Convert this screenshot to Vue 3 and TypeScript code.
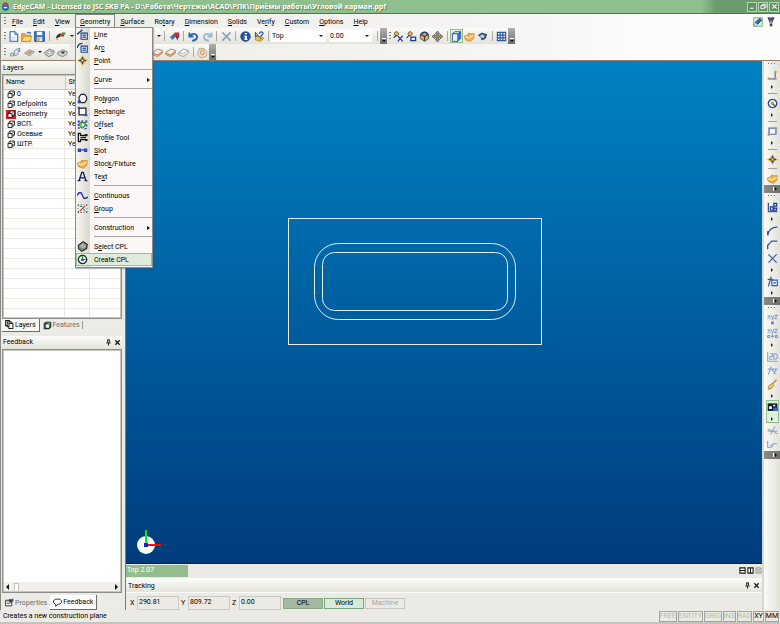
<script setup lang="ts">
import { computed, defineComponent, h, ref } from 'vue'

type Shape = [d: string, fill: string, stroke?: string, width?: number]

const NAVY = '#1c3a86'
const BLUE = '#2a62b8'
const GREY = '#8c8c88'
const PALE = '#8aa4cc'
const GOLD = '#f2b53a'

const glyphs: Record<string, Shape[]> = {
  app: [
    ['M3 7a5 5 0 0 1 10 0v4a5 4 0 0 1-10 0z', '#2f6fd0', '#16418f', 1],
    ['M5 1h6l2 4H3z', '#d8402c'],
    ['M5 9h6v2H5z', '#ffffff'],
  ],
  file: [
    ['M3 1h7l4 4v10H3z', '#ffffff', '#2f5fa8', 1.5],
    ['M10 1v4h4', '#a8c8f0', '#2f5fa8', 1.2],
    ['M5 8h6v5H5z', '#d5e6fa'],
  ],
  open: [
    ['M1 4h5l2 2h6v9H1z', '#f4b640', '#a86c10', 1],
    ['M4 8h12l-3 7H1z', '#ffd97a', '#c88a20', 1],
    ['M9 3c2-2 4-1 5 1', 'none', '#2a62b8', 1.8],
  ],
  save: [
    ['M1 1h14v14H1z', '#3c78cc', '#1d4a90', 1.4],
    ['M4 1h8v5H4z', '#ffffff'],
    ['M4 9h8v6H4z', '#dfe8f5'],
    ['M5 10h3v5H5z', '#e8a030'],
  ],
  paint: [
    ['M1 10c2-5 6-7 8-6l-1 4-5 2z', '#2d3238'],
    ['M7 4h7l-1 4H8z', '#c83a28'],
    ['M10 2h5v3h-5z', '#3a9a44'],
    ['M2 10l4 1-4 3z', '#e0a040'],
  ],
  flag: [
    ['M1 9l6-5 3 4-5 5z', '#3c70c0'],
    ['M8 2h7v7l-3 2-5-5z', '#c03028'],
    ['M10 8h4l-2 6z', '#20408c'],
    ['M1 9l3 1v3z', '#f0c040'],
  ],
  undo: [['M2 2v6h6M3 7c4-5 11-3 10 3-1 3-4 4-7 4', 'none', BLUE, 2.6]],
  redo: [['M14 2v6H8M13 7C9 2 2 4 3 10c1 3 4 4 7 4', 'none', '#9ab6da', 2.6]],
  cross: [['M2 2l12 12M14 2L2 14', 'none', '#8aa2bc', 2.4]],
  info: [
    ['M8 1a7 7 0 1 0 .1 0z', '#2456a8', '#14387a', 1],
    ['M7 3h3v2H7zM6 7h4v5h1v1H6v-1h1V8H6z', '#ffffff'],
  ],
  help: [
    ['M2 8h10l2 3-5 4-7-2z', '#f2c23c', '#9a7410', 1],
    ['M2 2l7 8M2 2v6l3-2', 'none', '#404040', 1.4],
    ['M8 4c0-4 6-3 5 0-1 2-3 2-3 4M10 10v2', 'none', BLUE, 2],
  ],
  snapPoint: [
    ['M5 1a3 3 0 1 0 .1 0z', GOLD, '#303030', 1],
    ['M1 10l4-4M7 7l7 8M14 7l-7 8', 'none', NAVY, 1.8],
  ],
  snapBox: [
    ['M6 1a3 3 0 1 0 .1 0z', GOLD, '#303030', 1],
    ['M1 10l4-4M7 9h7v5H7z', 'none', NAVY, 1.8],
  ],
  rotate: [
    ['M8 2l6 4v5l-6 4-6-4V6z', GOLD, '#3a3a3a', 1.2],
    ['M3 5l5 3 5-3M8 8v6M2 6c3-6 9-6 12 0', 'none', NAVY, 1.8],
  ],
  move: [
    ['M8 0l3 4H9v3h3V5l4 3-4 3V9H9v3h2l-3 4-3-4h2V9H4v2L0 8l4-3v2h3V4H5z', '#e09a20', '#29407c', 1],
  ],
  cube: [
    ['M2 4l4-3h8v10l-4 4H2z', '#e9f1fb', NAVY, 1.2],
    ['M2 4h8l4-3M10 4v11', 'none', NAVY, 1.3],
    ['M10 4l4-3v10l-4 4z', '#3a70c4'],
  ],
  stock: [
    ['M1 7l4-1 2-3 3 1 5 0-1 7-5 4-6-2-2-3z', '#f6b04a', '#c07c1c', 1],
    ['M2 8l5 2 7-4', 'none', '#ffe2a8', 2],
  ],
  shade: [
    ['M2 6l5-3 7 2-2 6-5 2-1-4z', '#3d5c90', '#222a44', 1],
    ['M4 7l5-2 2 4-4 1z', '#c9dcf4'],
  ],
  grid: [['M2 2h12v12H2zM2 6h12M2 10h12M6 2v12M10 2v12', 'none', '#3458a0', 1.7]],
  wire: [
    ['M1 9h4v4H1zM6 6l3-3 4 2-2 6-4 2z', '#dfe3ea', '#7484a0', 1.2],
    ['M11 2h3v5', 'none', '#5a78ae', 1.4],
  ],
  slabA: [
    ['M1 9l7-5 7 3-7 6z', '#c9d3e2', '#6a7890', 1],
    ['M4 9l4-3 4 1-4 3z', '#e07a38'],
  ],
  slabB: [
    ['M1 8l7-5 7 3-2 5-6 3-5-3z', '#d8d8d8', '#707478', 1.3],
    ['M4 9l4-3 4 1-4 3z', '#ffffff', '#8a8e94', 1],
  ],
  slabC: [
    ['M1 8l7-4 7 3-1 4-6 3-7-3z', '#cfd2d6', '#787c80', 1.2],
    ['M5 8l3-2 4 1-3 3z', '#44484c'],
  ],
  slabD: [
    ['M1 8l7-5 7 2v4l-7 5-7-3z', '#f2ece6', '#8f7c70', 1.2],
    ['M1 9l7 3 7-5', 'none', '#e88848', 2],
  ],
  slabE: [
    ['M1 8l7-5 7 2v4l-7 5-7-3z', '#f5f5f5', '#8f9298', 1.2],
    ['M1 8l7 2 7-5', 'none', '#a0a4aa', 1.2],
  ],
  swirl: [
    ['M3 2h7l4 4v7l-5 2H4l-3-5z', '#efe3c8', '#a8a090', 1.2],
    ['M11 5c-5-3-8 4-4 6 4 1 5-4 2-4', 'none', '#d0925a', 1.6],
  ],
  line: [
    ['M0 8l8-7', 'none', NAVY, 2],
    ['M6 6h9v9H6z', '#ffffff', NAVY, 1.6],
    ['M8 8h5v2H8zM8 11h5v2H8z', BLUE],
  ],
  arc: [
    ['M0 9c1-4 4-7 8-7', 'none', NAVY, 2],
    ['M6 6h9v9H6z', '#ffffff', NAVY, 1.6],
    ['M8 8h5v2H8zM8 11h5v2H8z', BLUE],
  ],
  point: [
    ['M8 0l3 5 5 3-5 3-3 5-3-5-5-3 5-3z', '#e8a828'],
    ['M8 3v10M3 8h10', 'none', '#2c3c70', 1.6],
    ['M6 6h4v4H6z', '#ffe060', '#2c3c70', 1],
  ],
  polygon: [
    ['M6 2h5l3 4v4l-3 4H6l-3-4V6z', '#ffffff', '#20243c', 1.8],
    ['M1 11h4v4H1z', '#2840d0'],
  ],
  rectangle: [
    ['M3 3h10v10H3z', '#ffffff', '#181c38', 1.8],
    ['M1 1h3v3H1zM12 12h3v3h-3z', '#2840d0'],
  ],
  offset: [
    ['M1 2h3v3H1zM6 2h3v2H6zM12 2h3v3h-3zM1 7h2v3H1zM1 12h3v2H1zM13 8h2v3h-2zM11 13h3v2h-3z', '#2840d0'],
    ['M4 5h8v5l-3 3H6l-2-3z', '#7cd070', '#287828', 1.4],
    ['M7 7h3v3H7z', '#ffffff'],
  ],
  profile: [
    ['M1 2h4v3h10M1 14h4v-3h10M2 2v12', 'none', '#101018', 1.8],
    ['M5 7h8v2H5zM12 3h3v3h-3zM12 10h3v3h-3z', '#101018'],
  ],
  slot: [
    ['M1 5h5v5H1zM10 5h5v5h-5z', '#2848e0'],
    ['M5 7h6', 'none', '#2848e0', 2],
  ],
  text: [['M3 14L7 2h2l4 12M5 10h6M1 14h4M11 14h4', 'none', '#101c58', 2]],
  continuous: [['M0 8l3-4h3l4 8h3l3-2', 'none', '#2030d8', 2]],
  group: [
    ['M1 1h14v14H1z', '#f2f2f2'],
    ['M1 2h2v2H1zM5 2h2v1H5zM9 2h2v1H9zM13 2h2v2h-2zM1 7h1v2H1zM14 7h1v2h-1zM1 12h2v2H1zM5 13h2v1H5zM9 13h2v1H9zM13 12h2v2h-2z', '#303030'],
    ['M4 12l8-8', 'none', '#d04040', 1.8],
    ['M4 5h4M9 8l3 4', 'none', '#2f8f6c', 1.8],
  ],
  selectCpl: [
    ['M2 6l7-5 6 4-1 6-7 4-5-4z', '#8b8d8a', '#262826', 1.6],
    ['M5 8l5-4M7 11l5-4', 'none', '#ffffff', 1.2],
    ['M4 11h4', 'none', '#3b9a3b', 1.4],
  ],
  createCpl: [
    ['M8 2a6 6 0 1 0 .1 0z', '#ffffff', '#20242c', 1.8],
    ['M8 3v5', 'none', '#30a030', 1.6],
    ['M8 8h5', 'none', '#e03030', 1.6],
    ['M6 7h4v3H6z', '#2840d0'],
  ],
  layer: [
    ['M6 1h9v8H6z', '#ffffff', '#202020', 1.8],
    ['M2 6h8v8H2z', '#f4f4f4', '#202020', 1.8],
    ['M2 6l4-5M10 6l5-5M10 14l5-5', 'none', '#202020', 1.6],
  ],
  layerTab: [
    ['M1 1h7v9H1z', '#ffffff', '#202020', 1.8],
    ['M4 3h7v9H4z', '#ffffff', '#202020', 1.8],
    ['M7 6h7v9H7z', '#ffffff', '#202020', 1.8],
  ],
  feature: [
    ['M2 4l3-2h9v9l-3 3H2z', '#2b4a48', '#101818', 1.2],
    ['M5 6h6v6H5z', '#e9f4f0'],
    ['M8 3h5v3H8z', '#44a878'],
  ],
  properties: [
    ['M1 4h11v10H1z', '#ffffff', '#303030', 1.6],
    ['M3 7h6M3 10h6', 'none', '#505050', 1.4],
    ['M7 2h7v4h-2v3h-3V6H7z', '#3a3a3a'],
    ['M13 1h2v5h-2z', BLUE],
  ],
  bubble: [['M4 2h8l3 3v3l-3 3H9l-4 4v-4H4L1 8V5z', '#ffffff', '#202020', 1.6]],
  pencil: [
    ['M1 1h14v14H1z', '#d9ead8', '#7fae7f', 1.4],
    ['M3 13l1-5 7-6 3 3-7 7z', '#2c62bc', '#18386c', 1],
    ['M3 13l1-4 3 3z', '#ffffff'],
  ],
  torch: [
    ['M3 1h4l1 2 1-2h4l-3 7H6z', '#46597c', '#26304a', 1],
    ['M6 8h4v7H6z', '#3a3f4c'],
    ['M7 6h2v5H7z', '#f0c850'],
  ],
  polyline: [
    ['M2 13h10V2', 'none', '#5878a8', 1.8],
    ['M1 11h3v3H1zM11 11h3v3h-3zM11 1h3v3h-3z', '#d89048'],
  ],
  circle: [
    ['M8 2a6 6 0 1 0 .1 0z', '#ffffff', '#27479a', 2],
    ['M8 8l4 4', 'none', '#27479a', 1.6],
    ['M6 6h3v3H6z', GOLD, '#a86c10', 1],
  ],
  box: [
    ['M3 3h10v9H3z', '#f5f8ff', '#4c6cb0', 1.8],
    ['M1 11h3v3H1zM12 2h3v3h-3z', '#d89048'],
  ],
  stats: [
    ['M2 1v13h13', 'none', '#3458a0', 1.8],
    ['M5 7h4v5H5zM10 2h4v4h-4zM10 9h4v3h-4z', '#dfe9f8', NAVY, 1.8],
  ],
  curveUp: [['M1 15c1-7 4-12 14-12M1 15V9', 'none', '#35589c', 2]],
  chamfer: [['M1 15V9l6-6h8', 'none', '#35589c', 2]],
  trim: [['M2 2l12 12M14 2L2 14', 'none', '#44659f', 1.9]],
  measure: [
    ['M1 5h8M6 1L2 15', 'none', '#35589c', 1.8],
    ['M7 6h8v8H7z', '#ffffff', '#2a62b8', 1.8],
    ['M9 9h4v2H9z', BLUE],
  ],
  xyz: [
    ['M1 2l4 5M5 2L1 7M6 2l2 4M10 2L7 9M11 2h4l-4 5h4', 'none', PALE, 1.5],
    ['M6 11h4v4H6z', '#5a82c0'],
  ],
  xyzMore: [
    ['M1 2l4 5M5 2L1 7M6 2l2 4M10 2L7 9M11 2h4l-4 5h4', 'none', PALE, 1.5],
    ['M1 11h3v3H1zM6 12h4M8 10v4M12 11h3v3h-3z', 'none', '#5a82c0', 1.3],
  ],
  flat: [['M1 1v14h14M4 4h4v4H4v4h4M10 4h3l2 2v4l-2 2h-3z', 'none', PALE, 1.6]],
  relation: [['M1 6h14M6 2L2 14M6 6l7 7M14 6l-5 7', 'none', '#88a4d4', 1.7]],
  brush: [
    ['M2 11l5-5 3 3-4 5-4 1z', '#f0c068', '#a88038', 1.2],
    ['M8 7l6-6', 'none', '#c89848', 2.4],
  ],
  mode: [
    ['M1 2h14v11H1z', '#101c30'],
    ['M3 6h4v4H3zM9 4h3v2H9z', '#ffffff'],
    ['M9 8h7v5H9z', '#3468c0'],
  ],
  split: [['M1 6l6 2 8 5M12 2L5 14M1 9h14', 'none', '#7894c4', 1.3]],
  wave: [
    ['M1 3v9c5 1 8-1 8-5h6', 'none', '#88a4d4', 1.6],
    ['M3 9l5-2v4z', '#a8bede'],
  ],
  pin: [['M5 2h6M6 2v6M10 2v6M3 9h10M8 9v6', 'none', '#181818', 2.2]],
  close: [['M3 3l10 10M13 3L3 13', 'none', '#181818', 3]],
  minimise: [['M3 12h7', 'none', '#ffffff', 2.6]],
  restore: [['M6 6V3h8v7h-3M2 6h8v7H2z', 'none', '#ffffff', 2]],
  closeWin: [['M3 3l10 10M13 3L3 13', 'none', '#ffffff', 2.6]],
  splitH: [['M2 2h12v12H2zM2 8h12', '#ffffff', '#181818', 2.4]],
  splitV: [['M2 2h12v12H2zM8 2v12', '#ffffff', '#181818', 2.4]],
  closeView: [['M2 2h12v12H2zM4 4l8 8M12 4l-8 8', '#dededa', GREY, 1.8]],
}

const Glyph = defineComponent({
  props: { name: { type: String, required: true } },
  setup(props) {
    return () =>
      h(
        'svg',
        { class: 'glyph', viewBox: '0 0 16 16', 'aria-hidden': 'true' },
        glyphs[props.name].map(([d, fill, stroke, width]) =>
          h('path', { d, fill, stroke: stroke ?? 'none', 'stroke-width': width ?? 0 }),
        ),
      )
  },
})

interface Label {
  before: string
  key: string
  after: string
}

/** Splits "Pro&file" into the text around its underlined access key. */
function label(source: string): Label {
  const at = source.indexOf('&')
  return at < 0
    ? { before: source, key: '', after: '' }
    : { before: source.slice(0, at), key: source[at + 1], after: source.slice(at + 2) }
}

const menus = ['&File', '&Edit', '&View', '&Geometry', '&Surface', 'Ro&tary', '&Dimension', '&Solids', 'Ve&rify', '&Custom', '&Options', '&Help'].map(label)
const openMenu = ref('G')

interface Entry {
  text?: Label
  icon?: string
  sub?: boolean
}

const entry = (text: string, icon?: string, sub = false): Entry => ({ text: label(text), icon, sub })
const rule: Entry = {}

const geometryMenu: Entry[] = [
  entry('&Line', 'line'),
  entry('Ar&c', 'arc'),
  entry('&Point', 'point'),
  rule,
  entry('&Curve', undefined, true),
  rule,
  entry('Po&lygon', 'polygon'),
  entry('&Rectangle', 'rectangle'),
  entry('O&ffset', 'offset'),
  entry('Pro&file Tool', 'profile'),
  entry('&Slot', 'slot'),
  entry('Stoc&k/Fixture', 'stock'),
  entry('Te&xt', 'text'),
  rule,
  entry('&Continuous', 'continuous'),
  entry('&Group', 'group'),
  rule,
  entry('Construction', undefined, true),
  rule,
  entry('S&elect CPL', 'selectCpl'),
  entry('Create CPL', 'createCpl'),
]
const hovered = ref('Create CPL')

const layers = ref([
  { name: '0', active: false },
  { name: 'Defpoints', active: false },
  { name: 'Geometry', active: true },
  { name: 'ВСП.', active: false },
  { name: 'Осевые', active: false },
  { name: 'ШТР.', active: false },
])

const fileTools = ['file', 'open', 'save']
const editTools = ['flag', '|', 'undo', 'redo', '|', 'cross', '|', 'info', 'help', '|']
const viewTools = ['snapPoint', 'snapBox', 'rotate', 'move', '|', 'cube', 'stock', 'shade', '|', 'grid']
const sideTools = [
  ':', 'polyline', '>', '|', 'circle', '>', '|', 'box', '>', '|', 'point', '|', 'stock', '#',
  ':', 'stats', '>', 'curveUp', 'chamfer', 'trim', '>', 'measure', '>', '#',
  ':', 'xyz', 'xyzMore', '>', 'flat', 'relation', 'brush', '>', 'mode+', 'split', 'wave', '#',
]

const position = ref({ X: '290.81', Y: '809.72', Z: '0.00' })
const toggles = [
  { text: 'FREE', on: false },
  { text: 'ENTITY', on: false },
  { text: 'GRID', on: false },
  { text: 'INS', on: false },
  { text: 'RAD', on: false },
  { text: 'XY', on: true },
  { text: 'MM', on: true },
]
const scale = ref(2.07)
const viewName = computed(() => `Top ${scale.value.toFixed(2)}`)
</script>

<template>
  <div class="window">
    <header class="titlebar">
      <Glyph name="app" />
      <h1>EdgeCAM - Licensed to JSC SKB PA - D:\Работа\Чертежы\ACAD\РПК\Приёмы работы\Угловой карман.ppf</h1>
      <div class="caption">
        <button aria-label="Minimise"><Glyph name="minimise" /></button>
        <button aria-label="Restore"><Glyph name="restore" /></button>
        <button aria-label="Close"><Glyph name="closeWin" /></button>
      </div>
    </header>

    <div class="bars">
      <nav class="menubar">
        <span class="grip"></span>
        <div v-for="menu in menus" :key="menu.before + menu.key + menu.after" class="menu">
          <button class="menu-title" :class="{ open: menu.key === openMenu }" @click="openMenu = menu.key">
            {{ menu.before }}<u>{{ menu.key }}</u>{{ menu.after }}
          </button>
          <div v-if="menu.key === 'G' && openMenu === 'G'" class="popup">
            <template v-for="(item, i) in geometryMenu" :key="i">
              <button
                v-if="item.text"
                class="entry"
                :class="{ hot: item.text.before === hovered }"
              >
                <span class="entry-icon"><Glyph v-if="item.icon" :name="item.icon" /></span>
                <span class="entry-text">{{ item.text.before }}<u>{{ item.text.key }}</u>{{ item.text.after }}</span>
                <span v-if="item.sub" class="sub-arrow"></span>
              </button>
              <div v-else class="entry-rule"></div>
            </template>
          </div>
        </div>
        <div class="menubar-end">
          <button aria-label="Edit"><Glyph name="pencil" /></button>
          <button aria-label="Find"><Glyph name="torch" /></button>
        </div>
      </nav>

      <div class="toolbar">
        <div class="strip tight">
          <span class="grip"></span>
          <button v-for="tool in fileTools" :key="tool" class="tool" :aria-label="tool"><Glyph :name="tool" /></button>
          <span class="divider"></span>
          <button class="tool split" aria-label="paint"><Glyph name="paint" /></button>
          <button class="drop" aria-label="More colours"></button>
        </div>
        <div class="strip loose">
          <button class="drop" aria-label="More styles"></button>
          <span class="divider"></span>
          <template v-for="(tool, i) in editTools" :key="i">
            <span v-if="tool === '|'" class="divider"></span>
            <button v-else class="tool" :aria-label="tool"><Glyph :name="tool" /></button>
          </template>
          <span class="combo"><select class="combo-view" aria-label="View"><option>Top</option></select></span>
          <span class="combo"><select class="combo-level" aria-label="Level"><option>0.00</option></select></span>
          <span class="divider"></span>
          <button class="cap" aria-label="Toolbar options"></button>
        </div>
        <div class="strip tight">
          <span class="grip"></span>
          <template v-for="(tool, i) in viewTools" :key="i">
            <span v-if="tool === '|'" class="divider"></span>
            <button v-else class="tool" :class="{ pressed: tool === 'cube' }" :aria-label="tool"><Glyph :name="tool" /></button>
          </template>
          <button class="cap" aria-label="Toolbar options"></button>
        </div>
      </div>

      <div class="toolbar">
        <div class="strip tight">
          <span class="grip"></span>
          <button class="tool split" aria-label="Wireframe"><Glyph name="wire" /></button>
          <button class="tool" aria-label="Slab"><Glyph name="slabA" /></button>
          <button class="drop" aria-label="More slabs"></button>
          <button class="tool" aria-label="Face"><Glyph name="slabB" /></button>
          <button class="tool" aria-label="Body"><Glyph name="slabC" /></button>
        </div>
        <div class="strip tight solids">
          <button class="tool" aria-label="Extrude"><Glyph name="slabD" /></button>
          <button class="tool" aria-label="Revolve"><Glyph name="slabD" /></button>
          <button class="tool" aria-label="Loft"><Glyph name="slabE" /></button>
          <span class="divider"></span>
          <button class="tool" aria-label="Twist"><Glyph name="swirl" /></button>
          <button class="cap" aria-label="Toolbar options"></button>
        </div>
      </div>
    </div>

    <main class="work">
      <aside class="docks">
        <h2 class="dock-title">Layers</h2>
        <div class="well layers">
          <table>
            <thead>
              <tr><th class="col-name">Name</th><th class="col-show">Show</th><th></th></tr>
            </thead>
            <tbody>
              <tr v-for="layer in layers" :key="layer.name">
                <td>
                  <span class="layer-name">
                    <span class="layer-icon" :class="{ active: layer.active }"><Glyph name="layer" /></span>{{ layer.name }}
                  </span>
                </td>
                <td class="col-show">Yes</td>
                <td></td>
              </tr>
            </tbody>
          </table>
        </div>
        <div class="tabs">
          <button class="tab selected"><Glyph name="layerTab" />Layers</button>
          <button class="tab ruled"><Glyph name="feature" />Features</button>
        </div>
        <h2 class="dock-title feedback-title">
          Feedback
          <span class="dock-tools">
            <button aria-label="Pin"><Glyph name="pin" /></button>
            <button aria-label="Close"><Glyph name="close" /></button>
          </span>
        </h2>
        <div class="well feedback">
          <div class="scroll">
            <button class="scroll-left" aria-label="Scroll left"></button>
            <span class="thumb"></span>
            <button class="scroll-right" aria-label="Scroll right"></button>
          </div>
        </div>
        <div class="tabs lower">
          <button class="tab"><Glyph name="properties" />Properties</button>
          <button class="tab selected raised"><Glyph name="bubble" />Feedback</button>
        </div>
      </aside>

      <section class="centre">
        <div class="canvas">
          <svg class="drawing" role="img" aria-label="Part outline">
            <rect x="162.500" y="157.500" width="253" height="126" />
            <rect x="188.500" y="182.500" width="201" height="76" rx="24" />
            <rect x="196.500" y="191.500" width="185" height="58" rx="12" />
          </svg>
          <svg class="axes" viewBox="0 0 26 26" aria-hidden="true">
            <circle cx="9" cy="16" r="9" fill="#ffffff" />
            <path d="M9 16V1" stroke="#00e828" stroke-width="2" />
            <path d="M9 16h15" stroke="#f01010" stroke-width="2" />
            <path d="M7 14h4v4H7z" fill="#1020e0" />
          </svg>
        </div>
        <div class="viewbar">
          <span class="view-name">{{ viewName }}</span>
          <div class="view-tools">
            <button aria-label="Split horizontally"><Glyph name="splitH" /></button>
            <button aria-label="Split vertically"><Glyph name="splitV" /></button>
            <button aria-label="Close view"><Glyph name="closeView" /></button>
          </div>
        </div>
        <h2 class="dock-title tracking-title">
          Tracking
          <span class="dock-tools">
            <button aria-label="Pin"><Glyph name="pin" /></button>
            <button aria-label="Close"><Glyph name="close" /></button>
          </span>
        </h2>
        <form class="tracking" @submit.prevent>
          <label>X<input v-model="position.X" /></label>
          <label>Y<input v-model="position.Y" /></label>
          <label>Z<input v-model="position.Z" /></label>
          <div class="spaces">
            <button type="button" class="space current">CPL</button>
            <button type="button" class="space world">World</button>
            <button type="button" class="space" disabled>Machine</button>
          </div>
        </form>
      </section>

      <aside class="side">
        <template v-for="(tool, i) in sideTools" :key="i">
          <span v-if="tool === ':'" class="side-grip"></span>
          <button v-else-if="tool === '>'" class="side-drop" aria-label="More"></button>
          <span v-else-if="tool === '|'" class="side-rule"></span>
          <button v-else-if="tool === '#'" class="side-cap" aria-label="Toolbar options"></button>
          <div v-else-if="tool === 'mode+'" class="side-pressed">
            <button class="side-tool" aria-label="mode"><Glyph name="mode" /></button>
            <button class="side-drop" aria-label="More modes"></button>
          </div>
          <button v-else class="side-tool" :aria-label="tool"><Glyph :name="tool" /></button>
        </template>
      </aside>
    </main>

    <footer class="status">
      <span>Creates a new construction plane</span>
      <div class="toggles">
        <button v-for="toggle in toggles" :key="toggle.text" :class="{ on: toggle.on }">{{ toggle.text }}</button>
      </div>
    </footer>
  </div>
</template>

<style>
body {
  margin: 0;
  background: #ebeae4;
}
</style>

<style scoped>
.window {
  display: flex;
  flex-direction: column;
  box-sizing: border-box;
  min-height: 100vh;
  border-bottom: 2px solid #c4c3bd;
  background: #ebeae4;
  color: #000000;
  font-family: Roboto, 'Liberation Sans', sans-serif;
  font-size: 7px;
  line-height: 10px;
  white-space: nowrap;
}

.window *,
.window *::before,
.window *::after {
  box-sizing: border-box;
}

button,
input,
select {
  margin: 0;
  padding: 0;
  border: 0;
  border-radius: 0;
  background: none;
  color: inherit;
  font: inherit;
}

h1,
h2 {
  margin: 0;
  font: inherit;
}

.glyph {
  display: block;
  flex: none;
  width: 11px;
  height: 11px;
}

.titlebar {
  display: flex;
  align-items: center;
  gap: 3px;
  height: 14px;
  padding: 0 1px;
  border-bottom: 1px solid #56705a;
  background: linear-gradient(90deg, #8fbf8c 0 701px, #6b9c6d 716px);
  color: #ffffff;
}

.titlebar .glyph {
  width: 9px;
  height: 9px;
}

.titlebar h1 {
  flex: 1;
  font-family: 'Open Sans', Roboto, sans-serif;
  font-weight: bold;
  text-shadow: 1px 1px 0 #5d8a5e;
}

.caption {
  display: flex;
  gap: 1px;
}

.caption button {
  display: grid;
  place-items: center;
  width: 10px;
  height: 10px;
  border: 1px solid #b4d4b2;
  background: #5f9362;
}

.caption .glyph {
  width: 7px;
  height: 7px;
}

.bars {
  padding-left: 2px;
  border-bottom: 1px solid #98806e;
  border-left: 1px solid #8a8a84;
  background: linear-gradient(90deg, #ecebe6, #f6f6f6 70%, #fcfcfc 85%);
}

.menubar {
  display: flex;
  height: 14px;
}

.grip {
  flex: none;
  align-self: center;
  width: 2px;
  height: 9px;
  margin: 0 1px;
  background: repeating-linear-gradient(#808080 0 1px, transparent 1px 3px);
}

.menu {
  position: relative;
}

.menu-title {
  height: 14px;
  padding: 0 4px;
  border: 1px solid transparent;
  border-bottom: 0;
}

.menu-title.open {
  border-color: #84847e;
  background: #f4f3ef;
}

.popup {
  position: absolute;
  z-index: 2;
  top: 13px;
  left: 0;
  width: 78px;
  padding-bottom: 1px;
  border: 1px solid #8a8a86;
  background: linear-gradient(90deg, #f6f5f1, #d9d9cd 14px, #faf7f6 14px);
  box-shadow: 1px 1px 1px #35507055;
}

.entry {
  display: flex;
  align-items: center;
  width: 100%;
  height: 13px;
  text-align: left;
}

.entry.hot {
  border: 1px solid #96bf96;
  background: #dfecdc;
}

.entry-icon {
  width: 18px;
  padding-left: 1px;
}

.hot .entry-icon {
  width: 17px;
  padding-left: 0;
}

.entry-icon .glyph {
  width: 11px;
  height: 11px;
}

.entry-text {
  flex: 1;
}

.sub-arrow {
  margin-right: 2px;
  border: 2px solid transparent;
  border-right-width: 0;
  border-left: 3px solid #101010;
}

.entry-rule {
  height: 6px;
  padding: 2px 0 0 18px;
}

.entry-rule::before {
  display: block;
  height: 1px;
  background: #a6a6a2;
  content: '';
}

.menubar-end {
  display: flex;
  gap: 3px;
  margin-left: auto;
  padding: 1px 4px 0 0;
}

.menubar-end .glyph {
  width: 10px;
  height: 10px;
}

.toolbar {
  display: flex;
  gap: 0;
  height: 16px;
}

.strip {
  display: flex;
  align-items: center;
  background: linear-gradient(#fafaf8, #e3e3da);
}

.strip.loose {
  margin-left: 80px;
}

.strip.solids {
  margin-left: 82px;
}

.tool {
  display: grid;
  place-items: center;
  width: 13px;
  height: 14px;
}

.loose .tool {
  width: 14px;
}

.tool.split {
  width: 16px;
}

.tool.pressed {
  border: 1px solid #8cc08c;
  background: #e2f0e0;
}

.divider {
  width: 6px;
  height: 10px;
  background: linear-gradient(#a8a8a0, #a8a8a0) center / 1px 100% no-repeat;
}

.loose .divider {
  width: 5px;
}

.drop {
  display: grid;
  place-items: center;
  width: 7px;
  height: 14px;
}

.drop::before,
.combo::after {
  width: 0;
  border: 2px solid transparent;
  border-top-color: #202020;
  border-bottom: 0;
  content: '';
}

.combo {
  display: flex;
  align-items: center;
  margin-right: 3px;
  padding-right: 3px;
  background: #ffffff;
}

.combo select {
  height: 12px;
  padding-left: 1px;
  appearance: none;
  outline: 0;
}

.combo-view {
  width: 48px;
}

.combo-level {
  width: 36px;
}

.cap {
  display: flex;
  flex-direction: column;
  align-items: center;
  justify-content: flex-end;
  gap: 1px;
  width: 7px;
  height: 16px;
  margin-right: 1px;
  padding-bottom: 2px;
  background: linear-gradient(#b0b0ac, #6f6f6c);
}

.cap::before {
  width: 4px;
  height: 1px;
  background: #ffffff;
  content: '';
}

.cap::after {
  border: 2px solid transparent;
  border-top-color: #101010;
  border-bottom: 0;
  content: '';
}

.work {
  display: flex;
  flex: 1;
  min-height: 0;
}

.docks {
  display: flex;
  flex: none;
  flex-direction: column;
  width: 126px;
  padding: 0 3px 0 1px;
  border-right: 1px solid #7b7b76;
  border-left: 1px solid #8a8a84;
}

.dock-title {
  display: flex;
  flex: none;
  align-items: center;
  justify-content: space-between;
  height: 13px;
  padding: 0 1px;
  background: linear-gradient(#fbfbf9, #e4e4da);
}

.dock-tools {
  display: flex;
  gap: 2px;
}

.dock-tools .glyph {
  width: 7px;
  height: 7px;
}

.well {
  display: flex;
  flex: 1 1 0;
  flex-direction: column;
  overflow: hidden;
  border: 1px solid #8c8c88;
  outline: 1px solid #c6c6c0;
  outline-offset: -2px;
  background: #ffffff;
}

.layers {
  background:
    linear-gradient(#e9e9e4, #e9e9e4) 61px 0 / 1px 100% no-repeat,
    linear-gradient(#e9e9e4, #e9e9e4) 86px 0 / 1px 100% no-repeat,
    repeating-linear-gradient(#ffffff 0 9px, #ebebe6 9px 10px) 0 14px / 100% auto,
    #ffffff;
}

table {
  width: 100%;
  border-collapse: collapse;
  table-layout: fixed;
}

th {
  height: 14px;
  padding: 0 3px;
  border-right: 1px solid #c6c6be;
  border-bottom: 1px solid #c6c6be;
  background: #efeee9;
  font-weight: normal;
  text-align: left;
}

.col-name {
  width: 62px;
}

th.col-show {
  width: 25px;
}

td {
  height: 10px;
  padding: 0 3px;
  overflow: hidden;
  line-height: 9px;
}

.layer-name {
  display: flex;
  align-items: center;
  gap: 1px;
}

.layer-icon {
  padding: 0 1px;
}

.layer-icon.active {
  background: #f01414;
}

.layer-icon .glyph {
  width: 8px;
  height: 9px;
}

.tabs {
  display: flex;
  flex: none;
  height: 15px;
  margin-bottom: 2px;
  padding: 0 0 2px;
  background: #ecebe6;
}

.tabs.lower {
  height: 15px;
  margin: 2px 0 0;
  padding: 0;
}

.tab {
  display: flex;
  align-items: center;
  gap: 1px;
  padding: 0 3px;
  color: #6c6c68;
}

.tab .glyph {
  width: 9px;
  height: 9px;
}

.tab.selected {
  border-right: 1px solid #6c6c68;
  border-bottom: 1px solid #6c6c68;
  background: #f8f8f6;
  color: #000000;
}

.tab.ruled {
  background: linear-gradient(#a0a09a, #a0a09a) right center / 1px 8px no-repeat;
}

.tab.raised {
  background: #ffffff;
}

.scroll {
  display: flex;
  align-items: center;
  height: 10px;
  margin-top: auto;
  padding: 0 3px;
  background: #f1f0eb;
}

.scroll-left,
.scroll-right {
  width: 3px;
  height: 6px;
  border: 3px solid transparent;
}

.scroll-left {
  border-right-color: #101010;
  border-left: 0;
}

.scroll-right {
  margin-left: auto;
  border-right: 0;
  border-left-color: #101010;
}

.thumb {
  width: 5px;
  height: 9px;
  margin-left: 5px;
  border: 1px solid #c2c2bc;
  background: #ffffff;
}

.centre {
  display: flex;
  flex: 1;
  flex-direction: column;
  min-width: 0;
}

.canvas {
  position: relative;
  flex: 1;
  border-bottom: 1px solid #00225c;
  background: linear-gradient(#0082c4, #003c7c);
}

.drawing {
  position: absolute;
  inset: 0;
  width: 100%;
  height: 100%;
}

.drawing rect {
  fill: none;
  stroke: #e4eef6;
  stroke-width: 1px;
}

.axes {
  position: absolute;
  bottom: 8px;
  left: 11px;
  width: 26px;
  height: 26px;
}

.viewbar {
  display: flex;
  align-items: center;
  justify-content: space-between;
  height: 15px;
  padding: 0 0 1px;
  border-bottom: 1px solid #ffffff;
}

.view-name {
  width: 62px;
  height: 12px;
  padding-left: 1px;
  background: #92bd8e;
  color: #ffffff;
}

.view-tools {
  display: flex;
  gap: 1px;
}

.view-tools .glyph {
  width: 7px;
  height: 7px;
}

.tracking-title {
  height: 14px;
  padding: 0 2px;
  border-bottom: 1px solid #fbfbf9;
}

.tracking {
  display: flex;
  align-items: flex-start;
  height: 17px;
  padding: 3px 0 0 4px;
}

.tracking label {
  display: flex;
  align-items: center;
  gap: 2px;
  width: 51px;
}

.tracking input {
  width: 42px;
  height: 14px;
  margin-left: auto;
  margin-right: 2px;
  padding: 0 1px 2px;
  border: 1px solid #c9c9c2;
}

.spaces {
  display: flex;
  gap: 1px;
  padding: 2px 0 0;
}

.space {
  width: 40px;
  height: 11px;
  border: 1px solid #c6c6c0;
  line-height: 9px;
}

.space.current {
  border-color: #88a888;
  background: #a4b8a2;
}

.space.world {
  border-color: #7aa87c;
  background: #d9ead7;
}

.space:disabled {
  color: #a8a8a2;
}

.side {
  display: flex;
  flex: none;
  flex-direction: column;
  align-items: center;
  width: 18px;
  border-left: 2px solid #d8d8d0;
  background: linear-gradient(90deg, #fafaf8, #e2e2d8);
}

.side-grip {
  width: 9px;
  height: 7px;
  background: repeating-linear-gradient(90deg, #707070 0 1px, transparent 1px 3px) 0 2px / 100% 1px no-repeat;
}

.side-tool {
  display: grid;
  place-items: center;
  width: 13px;
  height: 14px;
}

.side-drop {
  display: grid;
  place-items: center;
  width: 13px;
  height: 9px;
}

.side-drop::before {
  border: 2px solid transparent;
  border-right: 0;
  border-left-color: #202020;
  content: '';
}

.side-rule {
  width: 9px;
  height: 5px;
  background: linear-gradient(#a0a09a, #a0a09a) center / 100% 1px no-repeat;
}

.side-cap {
  display: flex;
  align-items: center;
  justify-content: flex-end;
  gap: 1px;
  width: 100%;
  height: 8px;
  padding-right: 3px;
  background: linear-gradient(90deg, #8a8a86, #6f6f6c);
}

.side-cap::before {
  width: 1px;
  height: 4px;
  background: #ffffff;
  content: '';
}

.side-cap::after {
  border: 2px solid transparent;
  border-right: 0;
  border-left-color: #101010;
  content: '';
}

.side-pressed {
  height: 23px;
  outline: 1px solid #8cc08c;
  outline-offset: -1px;
  background: #e2f0e0;
}

.status {
  display: flex;
  align-items: center;
  justify-content: space-between;
  height: 12px;
  padding: 0 1px 0 3px;
}

.toggles {
  display: flex;
  gap: 1px;
}

.toggles button {
  height: 11px;
  padding: 0;
  border: 1px solid #a4a49e;
  color: #aac6a8;
  line-height: 9px;
}

.toggles button.on {
  color: #000000;
}
</style>
